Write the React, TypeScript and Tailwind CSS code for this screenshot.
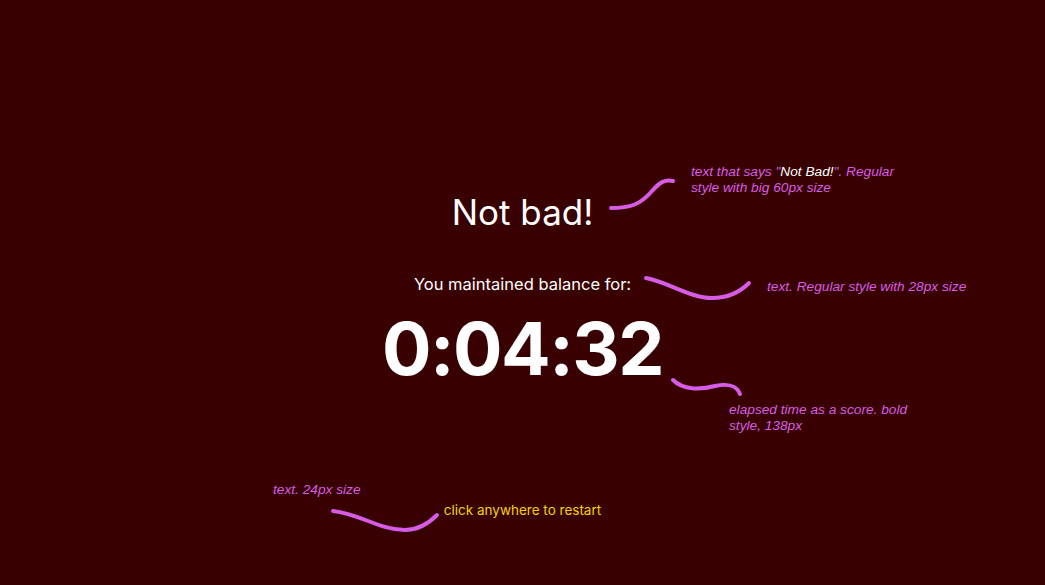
const NOTE = "absolute text-[13.7px] italic leading-[16px] text-[#d65ce6] [font-family:'Liberation_Sans',Arial,sans-serif]"

function Squiggles() {
    return (
        <svg className="pointer-events-none absolute inset-0" width="1045" height="585" viewBox="0 0 1045 585" fill="none">
            <g stroke="#d65ce6" strokeWidth="4" strokeLinecap="round">
                <path d="M611 208 C630 208 640 205 652 191 C660 182 665 179 673 181" />
                <path d="M646 278 C668 282 690 298 712 298 C728 298 740 292 749 283" />
                <path d="M673 380 C683 390 700 390 715 386 C730 383 737 386 740 394" />
                <path d="M333 511 C360 514 380 530 405 530 C420 530 430 522 437 515" />
            </g>
        </svg>
    )
}

export default function App() {
    return (
        <div className="relative h-[585px] w-[1045px] overflow-hidden bg-[#380000] [font-family:Inter,'Noto_Sans',sans-serif]">
            <div className="flex flex-col items-center pt-[188px]">
                <h1 className="text-[35px] leading-[48px] font-normal text-white">Not bad!</h1>
                <p className="mt-[36px] text-[16.5px] leading-[24px] text-white">You maintained balance for:</p>
                <div className="mt-[13px] text-[73.5px] leading-[80px] font-bold tracking-[-1.5px] text-white">0:04:32</div>
                <p className="mt-[112px] text-[13.5px] leading-[18px] text-[#f2d200]">click anywhere to restart</p>
            </div>

            <Squiggles />

            <p className={NOTE + " left-[691px] top-[164px] w-[220px]"}>
                text that says "<span className="text-white">Not Bad!</span>". Regular style with big 60px size
            </p>
            <p className={NOTE + " left-[767px] top-[279px]"}>text. Regular style with 28px size</p>
            <p className={NOTE + " left-[729px] top-[402px] w-[200px]"}>elapsed time as a score. bold style, 138px</p>
            <p className={NOTE + " left-[273px] top-[482px]"}>text. 24px size</p>
        </div>
    )
}
